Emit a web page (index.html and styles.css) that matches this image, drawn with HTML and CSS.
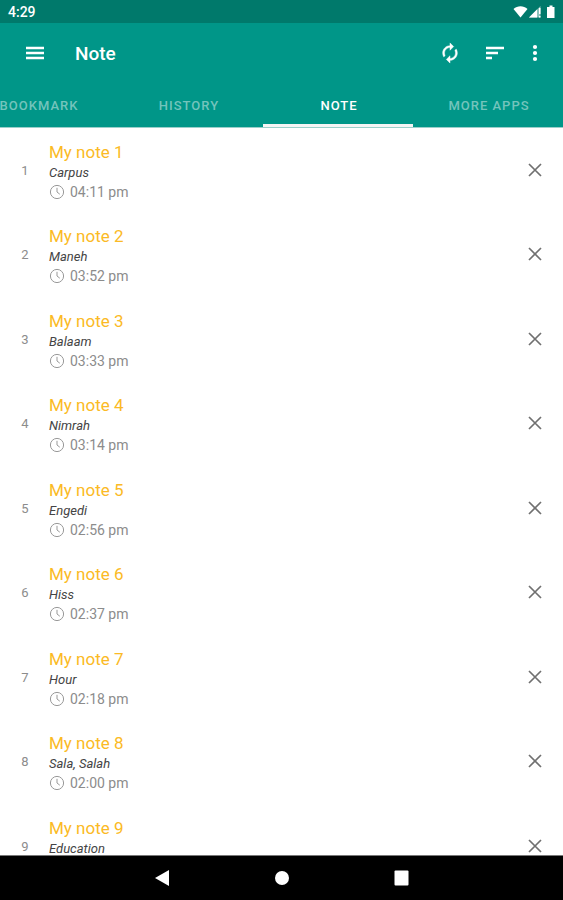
FILE: index.html
```html
<!DOCTYPE html>
<html lang="en">
<head>
<meta charset="utf-8">
<meta name="viewport" content="width=device-width, initial-scale=1">
<title>Note</title>
<link rel="stylesheet" href="styles.css">
</head>
<body>
<svg class="sprite" aria-hidden="true">
  <symbol id="close" viewBox="0 0 14 14"><path d="M1 1l12 12M13 1L1 13" fill="none" stroke="currentColor" stroke-width="1.7"/></symbol>
  <symbol id="clock" viewBox="0 0 16 16"><circle cx="8" cy="8" r="6.6" fill="none" stroke="currentColor"/><path d="M8 3.8V8l2.8 2.2" fill="none" stroke="currentColor"/></symbol>
</svg>
<div class="status">
  <span>4:29</span>
  <svg class="status-icons" viewBox="0 0 44 14" aria-hidden="true">
    <path d="M0.500 4C4.500 0.200 10.500 0.200 14.500 4L7.500 12.500z"/>
    <path d="M27.500 1v11.500H16z" opacity=".55"/>
    <path d="M24 4.500V12.500H16zM26 3h1.500v6H26zM26 11h1.500v1.500H26z"/>
    <path d="M36.500 0.500h3V2h2v11h-7.500V2h2.500z"/>
  </svg>
</div>
<header class="header">
  <div class="appbar">
    <button class="icon-button" aria-label="Menu"><svg width="20" height="16" viewBox="0 0 20 16"><path d="M1 3h18M1 8h18M1 13h18" stroke="currentColor" stroke-width="2.300"/></svg></button>
    <h1>Note</h1>
    <button class="icon-button refresh" aria-label="Refresh"><svg width="22" height="22" viewBox="0 0 24 24"><path fill="currentColor" stroke="currentColor" stroke-width=".5" d="M12 6v3l4-4-4-4v3c-4.420 0-8 3.580-8 8 0 1.570.46 3.030 1.240 4.260L6.700 14.800A5.870 5.870 0 0 1 6 12c0-3.310 2.690-6 6-6zm6.760 1.740L17.300 9.200c.44.84.7 1.790.7 2.800 0 3.310-2.690 6-6 6v-3l-4 4 4 4v-3c4.420 0 8-3.580 8-8 0-1.570-.46-3.030-1.240-4.260z"/></svg></button>
    <button class="icon-button sort" aria-label="Sort"><svg width="20" height="16" viewBox="0 0 20 16"><path d="M1 3h18M1 8h12M1 13h6" stroke="currentColor" stroke-width="2.400"/></svg></button>
    <button class="icon-button more" aria-label="More options"><svg width="6" height="18" viewBox="0 0 6 18" fill="currentColor"><circle cx="3" cy="3" r="2.100"/><circle cx="3" cy="9" r="2.100"/><circle cx="3" cy="15" r="2.100"/></svg></button>
  </div>
  <nav class="tabs">
    <a href="#bookmark">BOOKMARK</a>
    <a href="#history">HISTORY</a>
    <a href="#note" class="active" aria-current="page">NOTE</a>
    <a href="#more">MORE APPS</a>
  </nav>
</header>
<main class="content">
  <ol class="notes">
    <li><span class="number">1</span><div><h2>My note 1</h2><p>Carpus</p><time><svg><use href="#clock"/></svg>04:11 pm</time></div><button class="delete" aria-label="Delete note 1"><svg><use href="#close"/></svg></button></li>
    <li><span class="number">2</span><div><h2>My note 2</h2><p>Maneh</p><time><svg><use href="#clock"/></svg>03:52 pm</time></div><button class="delete" aria-label="Delete note 2"><svg><use href="#close"/></svg></button></li>
    <li><span class="number">3</span><div><h2>My note 3</h2><p>Balaam</p><time><svg><use href="#clock"/></svg>03:33 pm</time></div><button class="delete" aria-label="Delete note 3"><svg><use href="#close"/></svg></button></li>
    <li><span class="number">4</span><div><h2>My note 4</h2><p>Nimrah</p><time><svg><use href="#clock"/></svg>03:14 pm</time></div><button class="delete" aria-label="Delete note 4"><svg><use href="#close"/></svg></button></li>
    <li><span class="number">5</span><div><h2>My note 5</h2><p>Engedi</p><time><svg><use href="#clock"/></svg>02:56 pm</time></div><button class="delete" aria-label="Delete note 5"><svg><use href="#close"/></svg></button></li>
    <li><span class="number">6</span><div><h2>My note 6</h2><p>Hiss</p><time><svg><use href="#clock"/></svg>02:37 pm</time></div><button class="delete" aria-label="Delete note 6"><svg><use href="#close"/></svg></button></li>
    <li><span class="number">7</span><div><h2>My note 7</h2><p>Hour</p><time><svg><use href="#clock"/></svg>02:18 pm</time></div><button class="delete" aria-label="Delete note 7"><svg><use href="#close"/></svg></button></li>
    <li><span class="number">8</span><div><h2>My note 8</h2><p>Sala, Salah</p><time><svg><use href="#clock"/></svg>02:00 pm</time></div><button class="delete" aria-label="Delete note 8"><svg><use href="#close"/></svg></button></li>
    <li><span class="number">9</span><div><h2>My note 9</h2><p>Education</p></div><button class="delete" aria-label="Delete note 9"><svg><use href="#close"/></svg></button></li>
  </ol>
</main>
<footer class="system-nav">
  <button aria-label="Back"><svg viewBox="0 0 16 16"><path d="M15 0v16L1 8z"/></svg></button>
  <button aria-label="Home"><svg viewBox="0 0 16 16"><circle cx="8" cy="8" r="7"/></svg></button>
  <button aria-label="Recent apps"><svg viewBox="0 0 16 16"><rect x="0.500" y="0.500" width="14" height="15" rx="1"/></svg></button>
</footer>
</body>
</html>
```
FILE: styles.css
```css
* { box-sizing: border-box; }
body {
  display: flex;
  flex-direction: column;
  height: 100vh;
  margin: 0;
  background: #fff;
  font-family: Roboto, sans-serif;
}
h1, h2, p, ol { margin: 0; padding: 0; }
button {
  display: flex;
  align-items: center;
  justify-content: center;
  padding: 0;
  border: 0;
  background: none;
  color: inherit;
}
svg { display: block; }
.sprite { display: none; }
.status {
  display: flex;
  flex: none;
  align-items: center;
  justify-content: space-between;
  height: 23px;
  padding: 0 6px 0 8px;
  background: #00796b;
  color: #fff;
  font-size: 14px;
  font-weight: 500;
}
.status-icons { width: 44px; height: 14px; fill: #fff; }
.header {
  flex: none;
  background: #009688;
  color: #fff;
  border-bottom: 1px solid #9bcfca;
}
.appbar {
  display: flex;
  align-items: center;
  height: 60px;
  padding: 0 8px 0 15px;
}
.icon-button { width: 40px; height: 40px; }
.sort { margin-left: 5px; }
h1 {
  margin: 0 auto 0 20px;
  font-size: 19px;
  font-weight: 500;
}
.tabs {
  display: flex;
  justify-content: flex-end;
  overflow: hidden;
}
.tabs a {
  flex: none;
  width: 150px;
  height: 44px;
  padding-left: 2px;
  border-bottom: 3px solid transparent;
  color: #74c4bc;
  font-size: 13px;
  font-weight: 500;
  line-height: 45px;
  letter-spacing: 1px;
  text-align: center;
  text-decoration: none;
}
.tabs .active { border-color: #f5f5f5; color: #fff; }
.content { flex: 1; min-height: 0; overflow: hidden; }
.notes {
  display: grid;
  grid-auto-rows: 1fr;
  min-height: 760px;
  list-style: none;
}
.notes li {
  display: grid;
  grid-template-columns: 34px 1fr 40px;
  align-items: start;
  padding: 12px 8px 0 15px;
}
.number {
  width: 20px;
  line-height: 62px;
  color: #8c8c8c;
  font-size: 13px;
  text-align: center;
}
h2 {
  color: #fbba25;
  font-size: 17px;
  font-weight: 400;
  line-height: 24px;
}
p {
  color: #444;
  font-size: 13px;
  font-style: italic;
  line-height: 18px;
}
time {
  display: flex;
  align-items: center;
  gap: 5px;
  color: #8c8c8c;
  font-size: 14px;
  line-height: 20px;
}
time svg { width: 16px; height: 16px; color: #999; }
.delete { width: 40px; height: 60px; color: #707070; }
.delete svg { width: 14px; height: 14px; }
.system-nav {
  display: flex;
  flex: none;
  align-items: center;
  justify-content: center;
  gap: 80px;
  height: 45px;
  border-top: 1px solid #777;
  background: #000;
}
.system-nav button { width: 40px; height: 40px; }
.system-nav svg { width: 16px; height: 16px; fill: #fff; }
```
